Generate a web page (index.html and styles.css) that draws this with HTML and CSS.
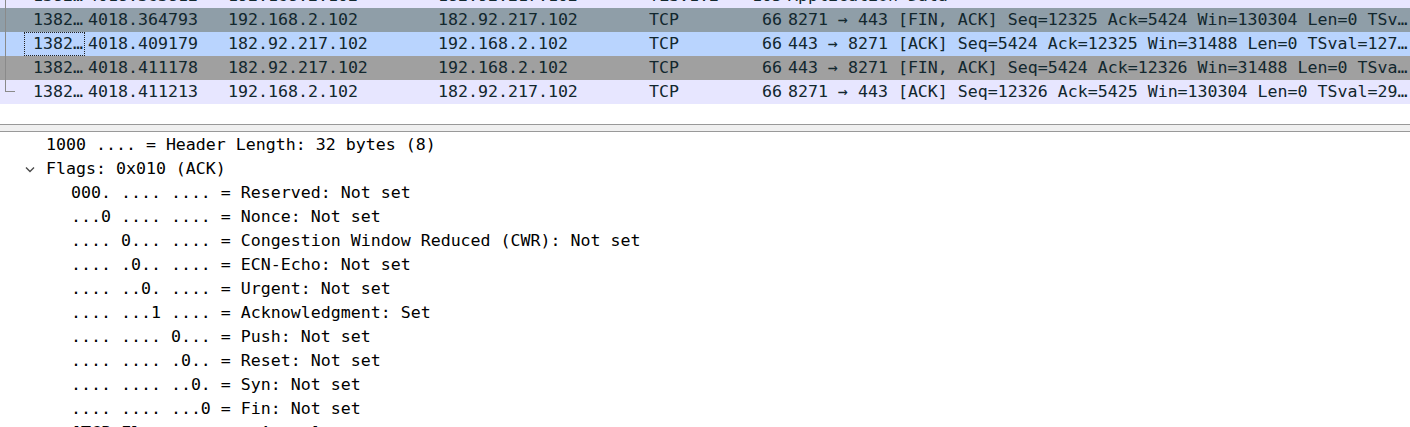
FILE: index.html
```html
<!DOCTYPE html>
<html>
<head>
<meta charset="utf-8">
<link rel="stylesheet" href="styles.css">
</head>
<body>
<div class="app">
  <div class="plist">
    <div class="partial">
      <div class="row tcp">
        <div class="c ind"><span class="vline"></span></div>
        <div class="c no">1382…</div>
        <div class="c">4018.363812</div>
        <div class="c">192.168.2.102</div>
        <div class="c">182.92.217.102</div>
        <div class="c">TLSv1.2</div>
        <div class="c len">105</div>
        <div class="c info">Application Data</div>
      </div>
    </div>
    <div class="row hover">
      <div class="c ind"><span class="vline"></span></div>
      <div class="c no">1382…</div>
      <div class="c">4018.364793</div>
      <div class="c">192.168.2.102</div>
      <div class="c">182.92.217.102</div>
      <div class="c">TCP</div>
      <div class="c len">66</div>
      <div class="c info">8271 → 443 [FIN, ACK] Seq=12325 Ack=5424 Win=130304 Len=0 TSv…</div>
    </div>
    <div class="row selected">
      <div class="c ind"><span class="vline"></span></div>
      <div class="c no focus">1382…</div>
      <div class="c">4018.409179</div>
      <div class="c">182.92.217.102</div>
      <div class="c">192.168.2.102</div>
      <div class="c">TCP</div>
      <div class="c len">66</div>
      <div class="c info">443 → 8271 [ACK] Seq=5424 Ack=12325 Win=31488 Len=0 TSval=127…</div>
    </div>
    <div class="row finrow">
      <div class="c ind"><span class="vline"></span></div>
      <div class="c no">1382…</div>
      <div class="c">4018.411178</div>
      <div class="c">182.92.217.102</div>
      <div class="c">192.168.2.102</div>
      <div class="c">TCP</div>
      <div class="c len">66</div>
      <div class="c info">443 → 8271 [FIN, ACK] Seq=5424 Ack=12326 Win=31488 Len=0 TSva…</div>
    </div>
    <div class="row tcp">
      <div class="c ind"><span class="corner"></span></div>
      <div class="c no">1382…</div>
      <div class="c">4018.411213</div>
      <div class="c">192.168.2.102</div>
      <div class="c">182.92.217.102</div>
      <div class="c">TCP</div>
      <div class="c len">66</div>
      <div class="c info">8271 → 443 [ACK] Seq=12326 Ack=5425 Win=130304 Len=0 TSval=29…</div>
    </div>
  </div>
  <div class="splitter"></div>
  <div class="details">
    <div class="dl lv1">1000 .... = Header Length: 32 bytes (8)</div>
    <div class="dl lv0t"><span class="tg"><svg width="10" height="7" viewBox="0 0 10 7"><polyline points="1,1.5 5,5.5 9,1.5" fill="none" stroke="#4a4a4a" stroke-width="1.4"/></svg></span>Flags: 0x010 (ACK)</div>
    <div class="dl lv2">000. .... .... = Reserved: Not set</div>
    <div class="dl lv2">...0 .... .... = Nonce: Not set</div>
    <div class="dl lv2">.... 0... .... = Congestion Window Reduced (CWR): Not set</div>
    <div class="dl lv2">.... .0.. .... = ECN-Echo: Not set</div>
    <div class="dl lv2">.... ..0. .... = Urgent: Not set</div>
    <div class="dl lv2">.... ...1 .... = Acknowledgment: Set</div>
    <div class="dl lv2">.... .... 0... = Push: Not set</div>
    <div class="dl lv2">.... .... .0.. = Reset: Not set</div>
    <div class="dl lv2">.... .... ..0. = Syn: Not set</div>
    <div class="dl lv2">.... .... ...0 = Fin: Not set</div>
    <div class="dl lv2">[TCP Flags: ·······A····]</div>
  </div>
</div>
</body>
</html>
```
FILE: styles.css
```css
html, body {
  margin: 0;
  padding: 0;
  background: #ffffff;
}
body {
  width: 1410px;
  height: 427px;
  overflow: hidden;
  font-family: "DejaVu Sans Mono", "Liberation Mono", monospace;
  font-size: 16.6px;
}
.app {
  display: flex;
  flex-direction: column;
  height: 427px;
  overflow: hidden;
}
.plist {
  height: 124px;
  flex: none;
  background: #ffffff;
  display: flex;
  flex-direction: column;
}
.partial {
  height: 8px;
  overflow: hidden;
  display: flex;
  flex-direction: column;
  justify-content: flex-end;
  flex: none;
}
.row {
  flex: none;
  height: 24px;
  display: grid;
  grid-template-columns: 24px 61px 140px 210px 211px 104px 35px 1fr;
  color: #12272e;
}
.row.tcp { background: #e7e6ff; }
.row.hover { background: #8f9ea8; }
.row.selected { background: #b9d4fe; }
.row.finrow { background: #a0a0a0; }
.c {
  display: flex;
  align-items: center;
  padding: 0 3px;
  white-space: pre;
  overflow: hidden;
  line-height: 24px;
}
.c.ind {
  padding: 0 0 0 5px;
  align-items: stretch;
}
.vline {
  display: block;
  width: 0;
  border-left: 1px solid #8a8a8a;
}
.corner {
  display: block;
  width: 10px;
  height: 12px;
  border-left: 1px solid #8a8a8a;
  border-bottom: 1px solid #8a8a8a;
  box-sizing: border-box;
}
.c.no {
  padding-left: 9px;
}
.c.focus {
  outline: 1px dotted #222;
  outline-offset: -1px;
}
.c.len {
  justify-content: flex-end;
}
.splitter {
  flex: none;
  height: 6px;
  background: #f0f0f0;
  border-top: 1px solid #999999;
  border-bottom: 1px solid #999999;
}
.details {
  flex: 1;
  color: #000000;
  overflow: hidden;
}
.dl {
  height: 24px;
  box-sizing: border-box;
  padding-top: 2px;
  line-height: 22px;
  display: flex;
  align-items: center;
  white-space: pre;
}
.dl.lv1 { padding-left: 46px; }
.dl.lv0t { padding-left: 25px; }
.dl.lv2 { padding-left: 71px; }
.tg {
  width: 21px;
  flex: none;
  display: flex;
  align-items: center;
}
.tg svg { display: block; }
```
